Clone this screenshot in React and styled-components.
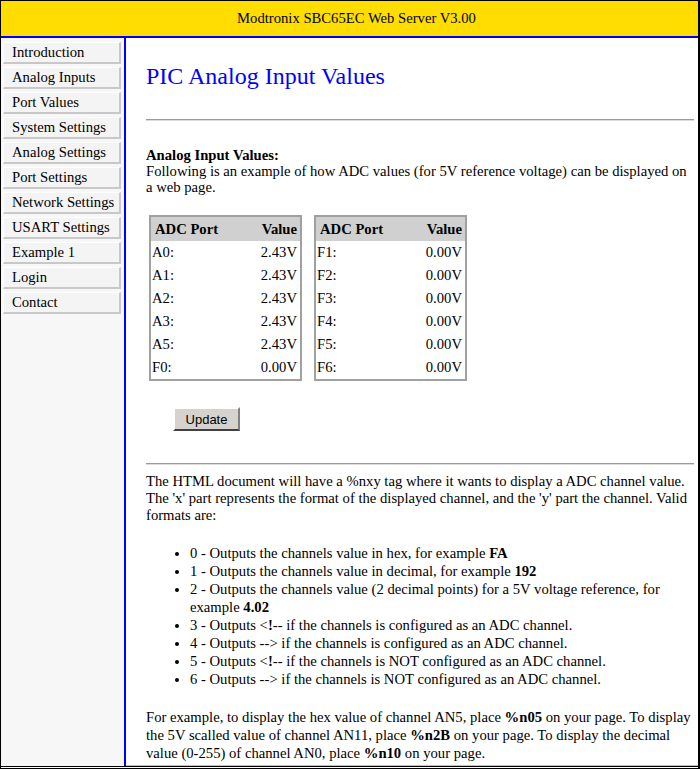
import React from 'react';
import styled, { createGlobalStyle } from 'styled-components';

const GlobalStyle = createGlobalStyle`
  html, body {
    margin: 0;
    padding: 0;
    background: #fff;
  }
  body {
    font-family: "Liberation Serif", "Times New Roman", serif;
    font-size: 14.667px;
    color: #000;
  }
`;

const menu = [
  'Introduction',
  'Analog Inputs',
  'Port Values',
  'System Settings',
  'Analog Settings',
  'Port Settings',
  'Network Settings',
  'USART Settings',
  'Example 1',
  'Login',
  'Contact',
];

const leftPorts = [
  ['A0:', '2.43V'],
  ['A1:', '2.43V'],
  ['A2:', '2.43V'],
  ['A3:', '2.43V'],
  ['A5:', '2.43V'],
  ['F0:', '0.00V'],
];

const rightPorts = [
  ['F1:', '0.00V'],
  ['F2:', '0.00V'],
  ['F3:', '0.00V'],
  ['F4:', '0.00V'],
  ['F5:', '0.00V'],
  ['F6:', '0.00V'],
];

function PortTable({ rows }) {
  return (
    <Table>
      <thead>
        <tr>
          <Th>ADC Port</Th>
          <Th $right>Value</Th>
        </tr>
      </thead>
      <tbody>
        {rows.map(([port, value]) => (
          <tr key={port}>
            <Td>{port}</Td>
            <Td $right>{value}</Td>
          </tr>
        ))}
      </tbody>
    </Table>
  );
}

export default function App() {
  return (
    <>
      <GlobalStyle />
      <Frame>
        <Header>Modtronix SBC65EC Web Server V3.00</Header>
        <Body>
          <Sidebar>
            {menu.map((item) => (
              <MenuItem key={item} href="#">{item}</MenuItem>
            ))}
          </Sidebar>
          <Content>
            <Title>PIC Analog Input Values</Title>
            <Rule />
            <Intro>
              <b>Analog Input Values:</b>
              <br />
              Following is an example of how ADC values (for 5V reference voltage) can be displayed on a web page.
            </Intro>
            <Tables>
              <PortTable rows={leftPorts} />
              <PortTable rows={rightPorts} />
            </Tables>
            <ButtonRow>
              <UpdateButton type="button">Update</UpdateButton>
            </ButtonRow>
            <Rule $second />
            <Para>
              The HTML document will have a %nxy tag where it wants to display a ADC channel value.
              The 'x' part represents the format of the displayed channel, and the 'y' part the channel. Valid formats are:
            </Para>
            <List>
              <li>0 - Outputs the channels value in hex, for example <b>FA</b></li>
              <li>1 - Outputs the channels value in decimal, for example <b>192</b></li>
              <li>2 - Outputs the channels value (2 decimal points) for a 5V voltage reference, for example <b>4.02</b></li>
              <li>3 - Outputs &lt;<b>!</b>-- if the channels is configured as an ADC channel.</li>
              <li>4 - Outputs --&gt; if the channels is configured as an ADC channel.</li>
              <li>5 - Outputs &lt;<b>!</b>-- if the channels is NOT configured as an ADC channel.</li>
              <li>6 - Outputs --&gt; if the channels is NOT configured as an ADC channel.</li>
            </List>
            <Para $tall>
              For example, to display the hex value of channel AN5, place <b>%n05</b> on your page. To display
              the 5V scalled value of channel AN11, place <b>%n2B</b> on your page. To display the decimal
              value (0-255) of channel AN0, place <b>%n10</b> on your page.
            </Para>
          </Content>
        </Body>
      </Frame>
    </>
  );
}

const Frame = styled.div`
  width: 700px;
  height: 769px;
  box-sizing: border-box;
  border-top: 1px solid #000;
  border-left: 1px solid #000;
  border-right: 2px solid #000;
  display: flex;
  flex-direction: column;
  overflow: hidden;
`;

const Header = styled.div`
  height: 35px;
  flex: none;
  background: #ffdd00;
  border-bottom: 2px solid #0000ff;
  display: flex;
  align-items: center;
  justify-content: center;
  padding-left: 14px;
`;

const Body = styled.div`
  flex: 1;
  display: flex;
  min-height: 0;
  border-bottom: 3px double #000;
  box-shadow: inset 0 -1px 0 #c0c0c0;
`;

const Sidebar = styled.nav`
  width: 125px;
  flex: none;
  background: #f7f7f7;
  border-right: 2px solid #0000ff;
  padding: 4px 0 0 2px;
  box-sizing: border-box;
  display: flex;
  flex-direction: column;
  gap: 3px;
`;

const MenuItem = styled.a`
  display: flex;
  align-items: center;
  height: 19px;
  padding-left: 8px;
  width: 107px;
  background: #f4f4f4;
  border-top: 1px solid #ffffff;
  border-left: 1px solid #ffffff;
  border-bottom: 2px solid #c8c8c8;
  border-right: 2px solid #c8c8c8;
  color: #000;
  text-decoration: none;
  white-space: nowrap;
`;

const Content = styled.main`
  flex: 1;
  padding: 0 4px 0 20px;
  overflow: hidden;
`;

const Title = styled.h1`
  margin: 24px 0 0;
  font-size: 24px;
  font-weight: normal;
  color: #0000ff;
  line-height: 28px;
`;

const Rule = styled.hr`
  margin: ${(p) => (p.$second ? '32px 0 8px' : '29px 0 0')};
  height: 0;
  border: none;
  border-top: 1px solid #9a9a9a;
  border-bottom: 1px solid #dcdcdc;
`;

const Intro = styled.p`
  margin: 26px 0 0;
  line-height: 16px;
`;

const Tables = styled.div`
  display: flex;
  gap: 12px;
  margin: 20px 0 0 3px;
`;

const Table = styled.table`
  width: 153px;
  border: 2px solid #a0a0a0;
  border-collapse: collapse;
`;

const Th = styled.th`
  background: #d0d0d0;
  height: 24px;
  padding: 0 3px 0 4px;
  text-align: ${(p) => (p.$right ? 'right' : 'left')};
`;

const Td = styled.td`
  height: 23px;
  padding: 0 3px 0 1px;
  text-align: ${(p) => (p.$right ? 'right' : 'left')};
`;

const ButtonRow = styled.div`
  margin: 26px 0 0 27px;
`;

const UpdateButton = styled.button`
  width: 67px;
  height: 24px;
  font-family: "Liberation Sans", Arial, sans-serif;
  font-size: 13px;
  background: #d6d3ce;
  border: 2px solid;
  border-color: #ffffff #808080 #404040 #ffffff;
  padding: 0;
  color: #000;
`;

const Para = styled.p`
  margin: 0;
  line-height: ${(p) => (p.$tall ? '18px' : '17px')};
`;

const List = styled.ul`
  margin: 20px 0 20px;
  padding-left: 44px;
  line-height: 18px;
`;
